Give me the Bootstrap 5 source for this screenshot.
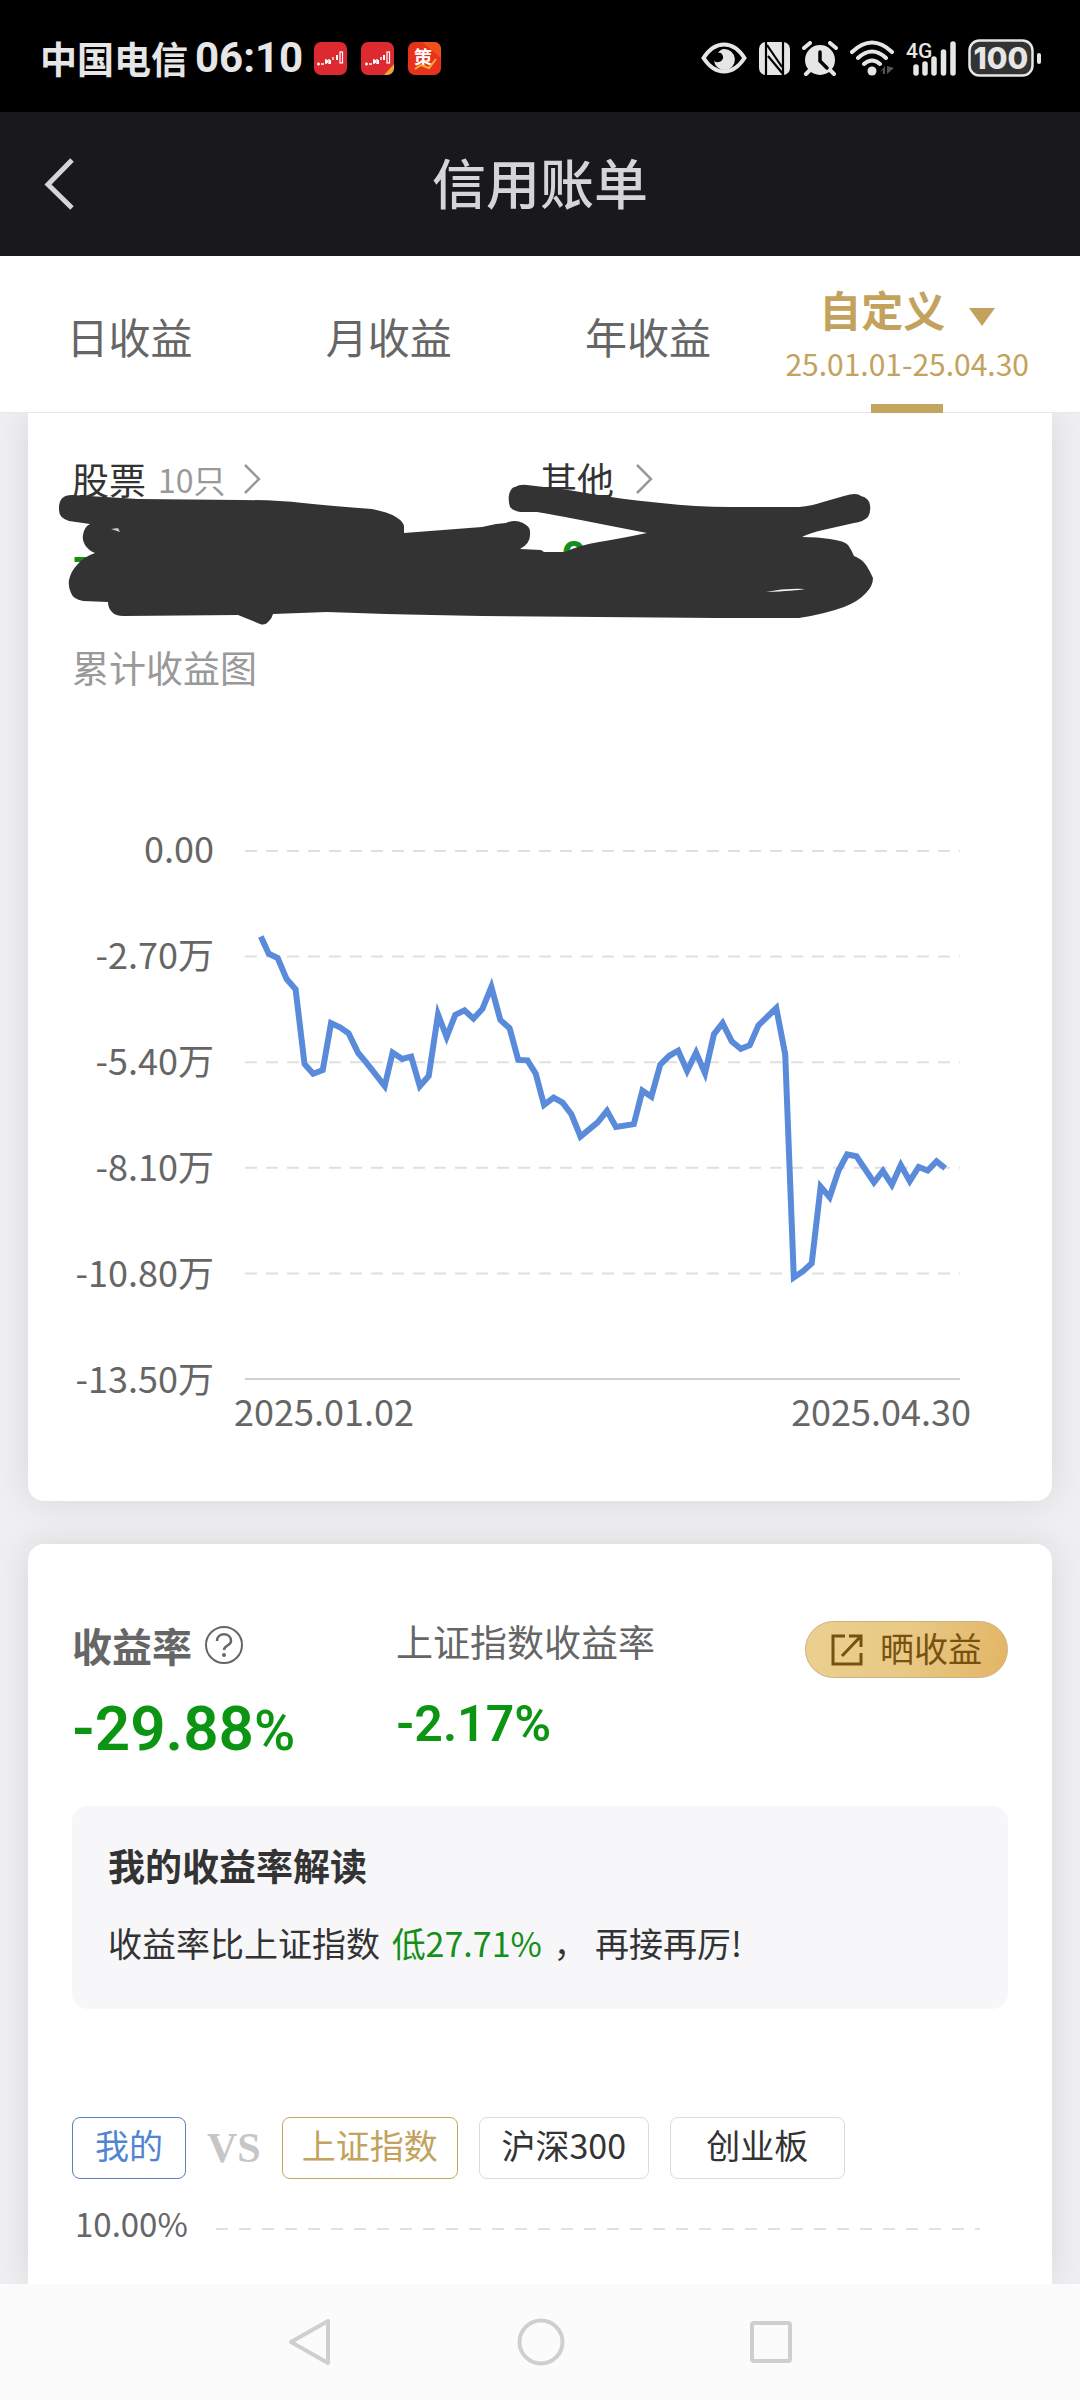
<!DOCTYPE html>
<html lang="zh-CN">
<head>
<meta charset="utf-8">
<meta name="viewport" content="width=device-width, initial-scale=1">
<title>信用账单</title>
<link href="https://cdn.jsdelivr.net/npm/bootstrap@5.3.0/dist/css/bootstrap.min.css" rel="stylesheet">
<style>
  body { font-family: "Noto Sans CJK SC", sans-serif; background: #efeff1; color: #333; font-size: 34px; line-height: 40px; }
  svg { display: block; flex: none; }
  button { font-family: inherit; }

  .statusbar { height: 112px; padding: 4px 38px 0 40px; background: #000; color: #e6e6e6; }
  .carrier { font-size: 37px; font-weight: 700; }
  .clock { font-family: Roboto, sans-serif; font-size: 42px; font-weight: 700; margin-left: 7px; }
  .app-icons { gap: 14px; margin-left: 11px; }
  .sys-icons { gap: 12px; }

  .titlebar { height: 144px; padding: 0 28px; background: #19191b; color: #d5d5d7; }
  .titlebar h1 { font-size: 54px; line-height: 64px; font-weight: 500; padding-bottom: 4px; }
  .side-slot { width: 62px; }
  .icon-btn { border: 0; padding: 0; background: none; color: inherit; }

  .period-tabs { height: 157px; padding-right: 4%; background: #fff; border-bottom: 1px solid #e9e7e9; }
  .period-tabs a { color: #666; font-size: 42px; line-height: 48px; text-decoration: none; padding-top: 4px; }
  .period-tabs a.current { color: #c3a25d; font-weight: 700; padding: 0 0 2px; }
  .range { font-size: 30px; line-height: 36px; font-weight: 400; margin-top: 12px; }
  .tab-bar { width: 72px; height: 9px; background: #c3a560; bottom: -1px; }

  .page { padding: 0 28px; }
  .panel { background: #fff; box-shadow: 0 0 32px rgba(40, 40, 60, .11); padding: 0 44px; }
  .panel-top { border-radius: 0 0 16px 16px; padding-top: 46px; padding-bottom: 71px; }
  .panel-rate { border-radius: 16px 16px 0 0; margin-top: 43px; padding-top: 77px; padding-bottom: 30px; }

  .holdings a { color: #333; font-size: 37px; text-decoration: none; gap: 12px; }
  .holdings small { font-size: 32px; color: #999; }
  .amount { font-family: Roboto, sans-serif; font-size: 44px; line-height: 50px; font-weight: 700; color: #148f18; margin-top: 32px; }
  .scribble { inset: 0 0 auto 0; width: 100%; pointer-events: none; }
  .chart-title { font-size: 37px; line-height: 40px; color: #999; margin-top: 64px; font-weight: 400; }

  .profit-chart { margin-top: 140px; color: #666; font-size: 36px; padding-right: 48px; }
  .y-axis { width: 142px; }
  .axis-gap { height: 66px; }
  .plot { margin: 24px 0 0 31px; }
  .plot svg { width: 100%; height: 528px; overflow: visible; }
  .x-axis { margin: 11px -11px 0; }
  .grid-line { stroke: #e0e0e0; stroke-width: 2; stroke-dasharray: 12 9; vector-effect: non-scaling-stroke; }
  .axis-line { stroke: #cfcfcf; stroke-width: 2; vector-effect: non-scaling-stroke; }
  .profit-line { fill: none; stroke: #5a8bda; stroke-width: 6; stroke-miterlimit: 6; vector-effect: non-scaling-stroke; }

  .rate-mine { width: 324px; }
  .rate-mine h2 { font-size: 40px; line-height: 40px; font-weight: 700; color: #666; }
  .rate-index h2 { font-size: 37px; line-height: 40px; font-weight: 400; color: #666; }
  .rate-value { font-family: Roboto, sans-serif; color: #0c9413; font-weight: 600; margin-top: 32px; }
  .rate-mine .rate-value { font-size: 62px; line-height: 64px; }
  .rate-mine .rate-value span { font-weight: 500; font-size: 56px; }
  .rate-index .rate-value { font-size: 50px; line-height: 62px; }
  .share-btn { height: 57px; width: 203px; border: 1px solid #cdb07a; border-radius: 29px; background: linear-gradient(100deg, #ebd090, #e8c985 50%, #e2b566); color: #77520f; font-size: 34px; line-height: 40px; gap: 17px; padding: 0 0 3px; }

  .reading { background: #f7f7f9; border-radius: 16px; padding: 37px 36px 44px; margin-top: 43px; line-height: 44px; }
  .reading h3 { font-size: 37px; line-height: 44px; font-weight: 700; margin-bottom: 34px; }
  .down { color: #148f18; }

  .versus { gap: 21px; margin-top: 108px; }
  .chip { height: 62px; min-width: 114px; padding: 0 19px 6px; border: 1px solid #dcdcdf; border-radius: 8px; background: #fff; color: #333; font-size: 34px; line-height: 40px; }
  .chip-mid { min-width: 170px; }
  .chip-wide { min-width: 175px; }
  .chip-mine { color: #5184d2; border-color: #5a83bd; }
  .chip-index { color: #c3a25d; border-color: #c3a660; }
  .vs-mark { font-family: "Liberation Serif", serif; font-weight: 700; font-size: 42px; color: #c6c6c6; }

  .rate-axis { margin-top: 24px; gap: 28px; padding: 0 28px 0 3px; color: #666; font-size: 33px; }
  .rate-axis svg { height: 4px; margin-top: 12px; }

  .sysnav { height: 116px; gap: 184px; background: #fbfbfc; color: #cfcfcf; }
</style>
</head>
<body>
<div class="d-flex flex-column min-vh-100">

  <div class="statusbar d-flex justify-content-between align-items-center">
    <div class="d-flex align-items-center">
      <span class="carrier">中国电信</span>
      <span class="clock">06:10</span>
      <span class="app-icons d-flex">
        <svg width="33" height="33" viewBox="0 0 33 33"><rect width="33" height="33" rx="7" fill="#dc2a30"/><path d="M3 22h3M4.500 20.500v3M7 22h3M12 17v5M15 17v5M19 15v3" stroke="#fff" stroke-width="1.400" fill="none"/><path d="M11 18h3v3h-3zM15 18h2v4h-2zM22 13h2v5h-2z" fill="#fff"/><rect x="26" y="10" width="2.500" height="11" fill="none" stroke="#fff" stroke-width="1.200"/></svg>
        <svg width="33" height="33" viewBox="0 0 33 33"><rect width="33" height="33" rx="7" fill="#dc2a30"/><path d="M33 22v4a7 7 0 0 1-7 7h-3z" fill="#efa63b"/><path d="M4 22h3M5.500 20.500v3M8 22h3M13 17v5M16 17v5M20 15v3" stroke="#fff" stroke-width="1.400" fill="none"/><path d="M12 18h3v3h-3zM16 18h2v4h-2zM22 13h2v5h-2z" fill="#fff"/><rect x="26" y="10" width="2.500" height="11" fill="none" stroke="#fff" stroke-width="1.200"/></svg>
        <svg width="33" height="33" viewBox="0 0 33 33"><rect width="33" height="33" rx="7" fill="#e8321c"/><path d="M14 0h12a7 7 0 0 1 7 7v9z" fill="#f2501a"/><text x="15" y="22" font-size="18" font-weight="700" fill="#fff" text-anchor="middle">策</text><path d="M7 27l6-4 8 3 7-9" fill="none" stroke="#f6b032" stroke-width="2"/></svg>
      </span>
    </div>
    <div class="sys-icons d-flex align-items-center">
      <svg width="46" height="32" viewBox="0 0 46 32"><path d="M2.500 16C9 6 15 2.500 23 2.500S37 6 43.500 16C37 26 31 29.500 23 29.500S9 26 2.500 16z" fill="none" stroke="#e6e6e6" stroke-width="4"/><path d="M23 7a10.500 10.500 0 1 1-10 12c4 3 10 0 9-5-1-3-3-4-5-3 1-2 4-4 6-4z" fill="#e6e6e6"/></svg>
      <svg width="31" height="33" viewBox="0 0 31 33"><rect width="31" height="33" rx="7" fill="#e6e6e6"/><path d="M7 0v33M8 3l15 22M9 14l15 18M24 0v33" fill="none" stroke="#000" stroke-width="2.200"/><path d="M11 0h11v15zM9 18v15h11z" fill="#e6e6e6"/></svg>
      <svg width="36" height="35" viewBox="0 0 36 35"><circle cx="18" cy="19" r="15" fill="#e6e6e6"/><path d="M8 29l-4 4M28 29l4 4M2 7l6-5M34 7l-6-5" stroke="#e6e6e6" stroke-width="4" stroke-linecap="round"/><path d="M18 11v9l7 7" fill="none" stroke="#000" stroke-width="3.500" stroke-linecap="round"/></svg>
      <svg width="44" height="36" viewBox="0 0 44 36"><g fill="none" stroke="#e6e6e6" stroke-width="4" stroke-linecap="round"><path d="M2 12q20-19 40 0M8 18q14-13 28 0M14 24q8-7 16 0"/></g><circle cx="22" cy="31" r="4.500" fill="#e6e6e6"/><path d="M30 32l5-6v8h-2v-4zM37 26v8l7-6z" fill="#555"/></svg>
      <svg width="50" height="36" viewBox="0 0 50 36"><text x="0" y="18" font-family="Roboto" font-weight="500" font-size="21" fill="#e6e6e6">4G</text><path d="M10 27v6M19 24v9M28 19v14M37.500 12v21M47 4v29" stroke="#e6e6e6" stroke-width="5.500" stroke-linecap="round"/></svg>
      <svg width="74" height="38" viewBox="0 0 74 38"><rect x="1.500" y="1.500" width="63" height="35" rx="10" fill="#333" stroke="#e6e6e6" stroke-width="2.500"/><text x="33" y="30" font-family="Inter" font-weight="800" font-size="30" fill="#e6e6e6" text-anchor="middle">100</text><rect x="69" y="14" width="4" height="11" rx="2" fill="#e6e6e6"/></svg>
    </div>
  </div>

  <header class="titlebar d-flex align-items-center justify-content-between">
    <button class="icon-btn side-slot" type="button" aria-label="返回">
      <svg width="62" height="60" viewBox="0 0 62 60"><path d="M44 6L20 30.500 44 54" fill="none" stroke="#d5d5d7" stroke-width="5"/></svg>
    </button>
    <h1 class="m-0">信用账单</h1>
    <span class="side-slot"></span>
  </header>

  <nav class="period-tabs d-flex position-relative">
    <a class="w-25 d-flex align-items-center justify-content-center" href="#">日收益</a>
    <a class="w-25 d-flex align-items-center justify-content-center" href="#">月收益</a>
    <a class="w-25 d-flex align-items-center justify-content-center" href="#">年收益</a>
    <a class="w-25 current position-relative d-flex flex-column align-items-center justify-content-center" href="#" aria-current="page">
      <span class="d-flex align-items-center justify-content-center w-100">
        自定义
        <svg class="ms-4 mt-3" width="26" height="18" viewBox="0 0 26 18"><path d="M0 0h26L13 18z" fill="#c3a25d"/></svg>
      </span>
      <span class="range">25.01.01-25.04.30</span>
      <span class="tab-bar position-absolute"></span>
    </a>
  </nav>

  <main class="page flex-grow-1 d-flex flex-column overflow-hidden">
    <section class="panel panel-top position-relative">
      <div class="row g-0 holdings">
        <div class="col-6">
          <a class="d-inline-flex align-items-center" href="#">股票 <small>10只</small>
            <svg class="ms-1" width="20" height="30" viewBox="0 0 20 30"><path d="M3 1l14 14L3 29" fill="none" stroke="#999" stroke-width="2.500"/></svg></a>
          <div class="amount">-</div>
        </div>
        <div class="col-6">
          <a class="d-inline-flex align-items-center" href="#">其他
            <svg class="ms-2" width="20" height="30" viewBox="0 0 20 30"><path d="M3 1l14 14L3 29" fill="none" stroke="#999" stroke-width="2.500"/></svg></a>
          <div class="amount ps-1">-0</div>
        </div>
      </div>
      <svg class="scribble position-absolute" viewBox="28 413 1024 230">
        <path fill="#333" d="M72 495L138 499 241 500Q275 500 303 503T372 509Q388 512 396 517T404 527V533L482 527 496 524 506 523Q515 519 523 523T530 533Q531 543 520 549L541 550 544 552H565Q580 545 599 542T647 533L606 525Q586 521 565 517T537 512L520 512Q512 510 510 507 508 500 509 495 511 487 515 487 520 484 527 485L544 487Q565 489 592 494T661 503Q695 507 730 507H799Q812 506 823 502L844 496Q857 492 861 496 869 498 870 505T868 517Q863 522 854 523L823 530Q810 533 802 537 818 537 830 539 845 541 848 545T854 556Q862 559 866 565T873 578Q873 586 866 593 859 601 844 607 825 614 799 618H716L599 617 482 616Q430 615 386 614L327 612 273 614Q272 618 269 621 265 626 260 624L238 615 124 616Q115 616 112 612 108 608 108 602L83 601Q73 599 71 593 68 587 69 580 71 571 77 565 83 557 95 553 88 550 85 545 82 540 83 535 84 527 90 524L69 521Q59 518 59 510 58 495 72 495z"/>
        <path d="M766 592Q785 588 805 589 795 591 766 592z" fill="#f4f4f4"/>
        <path d="M111 529l9 3-2-4z" fill="#ccc"/>
      </svg>
      <h2 class="chart-title mb-0">累计收益图</h2>

      <div class="profit-chart d-flex">
        <div class="y-axis text-end flex-shrink-0">
          <div>0.00</div><div class="axis-gap"></div>
          <div>-2.70万</div><div class="axis-gap"></div>
          <div>-5.40万</div><div class="axis-gap"></div>
          <div>-8.10万</div><div class="axis-gap"></div>
          <div>-10.80万</div><div class="axis-gap"></div>
          <div>-13.50万</div>
        </div>
        <div class="plot flex-grow-1">
          <svg viewBox="711 112 2078 1150" preserveAspectRatio="none" role="img" aria-label="累计收益图">
            <path class="grid-line" d="M711 112H2789"/>
            <path class="grid-line" d="M711 342H2789"/>
            <path class="grid-line" d="M711 572H2789"/>
            <path class="grid-line" d="M711 802H2789"/>
            <path class="grid-line" d="M711 1032H2789"/>
            <path class="axis-line" d="M711 1262H2789"/>
            <polyline class="profit-line" points="757,298 780,336 806,345 832,391 858,413 884,576 909,597 937,589 961,487 987,496 1012,509 1040,552 1066,575 1117,624 1140,551 1168,565 1194,560 1219,624 1245,602 1272,468 1297,517 1322,469 1349,459 1375,477 1401,456 1427,408 1453,480 1480,498 1505,567 1532,568 1556,597 1580,665 1608,649 1634,660 1660,686 1686,734 1736,703 1763,678 1789,713 1841,707 1866,634 1892,647 1918,577 1944,558 1970,547 1996,591 2022,551 2048,596 2074,511 2099,487 2126,527 2152,543 2178,535 2203,492 2255,454 2281,555 2306,1041 2333,1027 2358,1010 2384,843 2410,866 2436,808 2461,773 2488,777 2539,834 2565,809 2591,839 2617,796 2643,831 2669,800 2695,808 2721,788 2746,803"/>
          </svg>
          <div class="x-axis d-flex justify-content-between"><span>2025.01.02</span><span>2025.04.30</span></div>
        </div>
      </div>
    </section>

    <section class="panel panel-rate flex-grow-1">
      <div class="d-flex align-items-start">
        <div class="rate-mine pt-1">
          <h2 class="d-flex align-items-center mb-0">收益率
            <svg class="ms-2 ps-1" width="44" height="40" viewBox="0 0 40 40" role="img" aria-label="说明"><circle cx="20" cy="20" r="18" fill="none" stroke="#666" stroke-width="2"/><path d="M13 16c0-9 14-9 14 0 0 5-7 4-7 9" fill="none" stroke="#666" stroke-width="2.500"/><circle cx="20" cy="30" r="2" fill="#666"/></svg></h2>
          <div class="rate-value">-29.88<span>%</span></div>
        </div>
        <div class="rate-index flex-grow-1">
          <h2 class="mb-0">上证指数收益率</h2>
          <div class="rate-value">-2.17%</div>
        </div>
        <button class="share-btn d-flex align-items-center justify-content-center" type="button">
          <svg class="mt-1" width="32" height="32" viewBox="0 0 32 32"><path d="M14 2H2v28h28V19M18 2h12v11M30 2L11 22" fill="none" stroke="#77520f" stroke-width="3"/></svg>
          晒收益</button>
      </div>

      <div class="reading">
        <h3>我的收益率解读</h3>
        <p class="mb-0">收益率比上证指数 <span class="down mx-1">低27.71%</span> ， 再接再厉!</p>
      </div>

      <div class="versus d-flex align-items-center">
        <button class="chip chip-mine" type="button">我的</button>
        <span class="vs-mark">VS</span>
        <button class="chip chip-wide chip-index" type="button">上证指数</button>
        <button class="chip chip-mid" type="button">沪深300</button>
        <button class="chip chip-wide" type="button">创业板</button>
      </div>

      <div class="rate-axis d-flex align-items-center">
        <span>10.00%</span>
        <svg class="flex-grow-1 flex-shrink-1 w-50"><line x1="0" y1="2" x2="100%" y2="2" stroke="#e2e0e3" stroke-width="2" stroke-dasharray="12 11"/></svg>
      </div>
    </section>
  </main>

  <nav class="sysnav d-flex align-items-center justify-content-center">
    <button class="icon-btn" type="button" aria-label="后退"><svg width="46" height="50" viewBox="0 0 46 50"><path d="M41 4v42L4 25z" fill="none" stroke="currentColor" stroke-width="4" stroke-linejoin="round"/></svg></button>
    <button class="icon-btn" type="button" aria-label="主页"><svg width="48" height="48" viewBox="0 0 48 48"><circle cx="24" cy="24" r="21.500" fill="none" stroke="currentColor" stroke-width="4"/></svg></button>
    <button class="icon-btn" type="button" aria-label="最近任务"><svg width="44" height="44" viewBox="0 0 44 44"><rect x="3" y="3" width="38" height="38" rx="2" fill="none" stroke="currentColor" stroke-width="4"/></svg></button>
  </nav>
</div>
<script src="https://cdn.jsdelivr.net/npm/bootstrap@5.3.0/dist/js/bootstrap.bundle.min.js"></script>
</body>
</html>
